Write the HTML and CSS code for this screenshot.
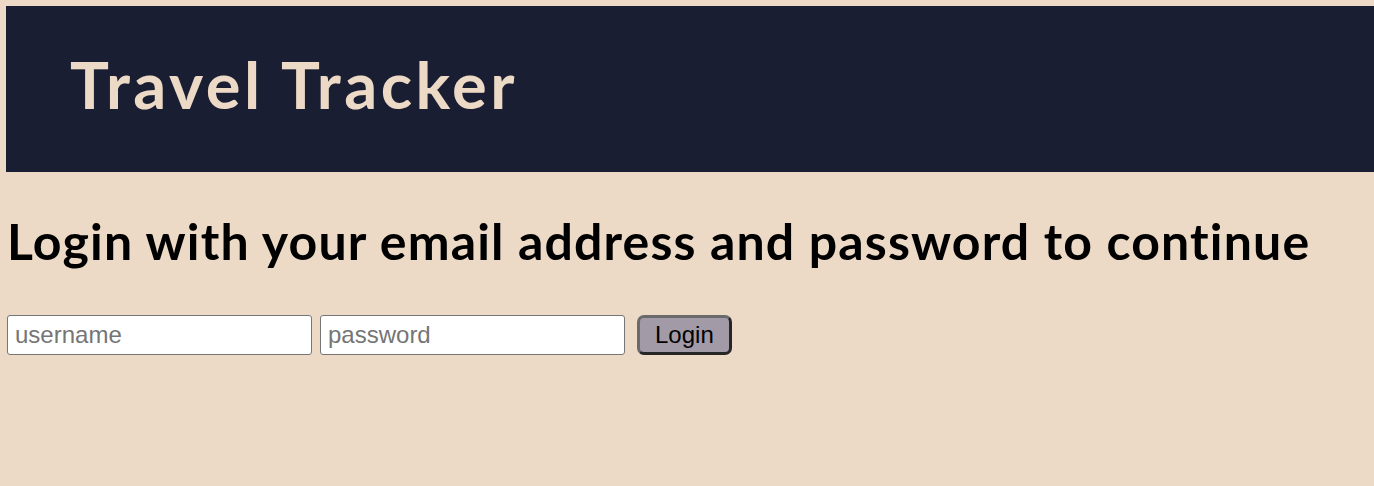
FILE: index.html
```html
<!DOCTYPE html>
<html lang="en">
<head>
<meta charset="utf-8">
<title>Travel Tracker</title>
<link rel="stylesheet" href="styles.css">
</head>
<body>
<header class="site-header">
  <h1 class="site-title">Travel Tracker</h1>
</header>
<main class="login">
  <h2 class="login-heading">Login with your email address and password to continue</h2>
  <form class="login-form">
    <input class="login-input" type="text" placeholder="username">
    <input class="login-input" type="password" placeholder="password">
    <button class="login-button" type="button">Login</button>
  </form>
</main>
</body>
</html>
```

FILE: styles.css
```css
html, body {
  margin: 0;
  padding: 0;
}
body {
  background: #eddac6;
  padding: 6px 0 0 6px;
  font-family: "Lato", "Noto Sans", sans-serif;
}
.site-header {
  background: #1a1e33;
  height: 166px;
  display: flex;
  align-items: center;
  padding-left: 64px;
  padding-bottom: 10px;
  box-sizing: border-box;
}
.site-title {
  margin: 0;
  color: #eddac6;
  font-size: 65px;
  font-weight: 700;
  letter-spacing: 3.5px;
}
.login {
  padding-left: 1px;
}
.login-heading {
  margin: 39px 0 0 0;
  font-size: 50px;
  font-weight: 700;
  color: #000;
  letter-spacing: 1.15px;
}
.login-form {
  display: flex;
  align-items: center;
  margin-top: 44px;
}
.login-input {
  width: 305px;
  height: 40px;
  box-sizing: border-box;
  border: 1px solid #767676;
  border-radius: 3px;
  background: #fff;
  font-family: "Liberation Sans", Arial, sans-serif;
  font-size: 24px;
  padding: 0 7px;
  margin-right: 8px;
  color: #000;
}
.login-input::placeholder {
  color: #757575;
}
.login-button {
  height: 40px;
  box-sizing: border-box;
  margin-left: 4px;
  padding: 0 15px 0 15px;
  border: 3px solid #262626;
  border-top-color: #6a6a6a;
  border-left-color: #6a6a6a;
  border-radius: 7px;
  background: #a39aa8;
  font-family: "Liberation Sans", Arial, sans-serif;
  font-size: 24px;
  color: #000;
}
```
